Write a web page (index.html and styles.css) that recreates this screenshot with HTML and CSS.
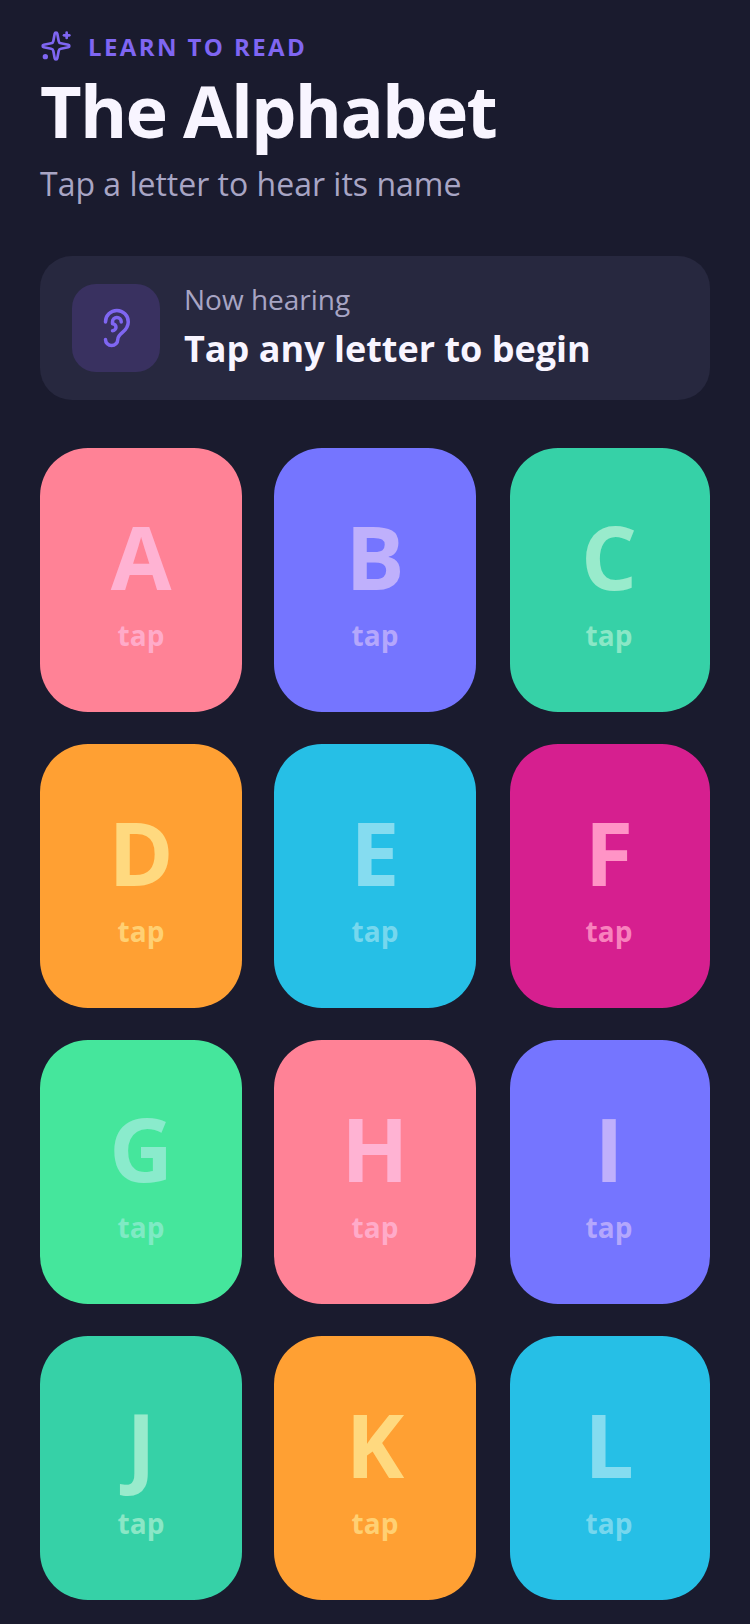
FILE: index.html
```html
<!DOCTYPE html>
<html lang="en">
<head>
<meta charset="utf-8">
<title>The Alphabet</title>
<link rel="stylesheet" href="styles.css">
</head>
<body>
<main class="screen">
  <header class="head">
    <div class="eyebrow">
      <svg class="sparkle" viewBox="0 0 24 24" fill="none" stroke="currentColor" stroke-width="2" stroke-linecap="round" stroke-linejoin="round"><path d="M11.017 2.814a1 1 0 0 1 1.966 0l1.051 5.558a2 2 0 0 0 1.594 1.594l5.558 1.051a1 1 0 0 1 0 1.966l-5.558 1.051a2 2 0 0 0-1.594 1.594l-1.051 5.558a1 1 0 0 1-1.966 0l-1.051-5.558a2 2 0 0 0-1.594-1.594l-5.558-1.051a1 1 0 0 1 0-1.966l5.558-1.051a2 2 0 0 0 1.594-1.594z"/><path d="M20 2v4"/><path d="M22 4h-4"/><circle cx="4" cy="20" r="1" fill="currentColor"/></svg>
      <span class="eyebrow-text">LEARN TO READ</span>
    </div>
    <h1 class="title">The Alphabet</h1>
    <p class="sub">Tap a letter to hear its name</p>
  </header>
  <section class="now">
    <div class="now-icon">
      <svg class="ear" viewBox="0 0 24 24" fill="none" stroke="currentColor" stroke-width="2" stroke-linecap="round" stroke-linejoin="round"><path d="M6 8.500a6.500 6.500 0 1 1 13 0c0 6-6 6-6 10a3.500 3.500 0 1 1-7 0"/><path d="M15 8.500a2.500 2.500 0 0 0-5 0v1a2 2 0 1 1 0 4"/></svg>
    </div>
    <div class="now-text">
      <div class="now-label">Now hearing</div>
      <div class="now-value">Tap any letter to begin</div>
    </div>
  </section>
  <section class="grid">
    <button class="card pink"><span class="letter">A</span><span class="tap">tap</span></button>
    <button class="card violet"><span class="letter">B</span><span class="tap">tap</span></button>
    <button class="card teal"><span class="letter">C</span><span class="tap">tap</span></button>
    <button class="card orange"><span class="letter">D</span><span class="tap">tap</span></button>
    <button class="card cyan"><span class="letter">E</span><span class="tap">tap</span></button>
    <button class="card magenta"><span class="letter">F</span><span class="tap">tap</span></button>
    <button class="card green"><span class="letter">G</span><span class="tap">tap</span></button>
    <button class="card pink"><span class="letter">H</span><span class="tap">tap</span></button>
    <button class="card violet"><span class="letter">I</span><span class="tap">tap</span></button>
    <button class="card teal"><span class="letter">J</span><span class="tap">tap</span></button>
    <button class="card orange"><span class="letter">K</span><span class="tap">tap</span></button>
    <button class="card cyan"><span class="letter">L</span><span class="tap">tap</span></button>
  </section>
</main>
</body>
</html>
```
FILE: styles.css
```css
* { box-sizing: border-box; }
html, body { margin: 0; padding: 0; }
body { background: #1a1b2e; font-family: "Open Sans", sans-serif; width: 750px; height: 1624px; overflow: hidden; }
.screen { padding: 29px 40px 0; }
.eyebrow { display: flex; align-items: center; gap: 16px; height: 34px; color: #7f66f2; }
.sparkle { width: 32px; height: 32px; display: block; }
.eyebrow-text { font-size: 24px; font-weight: 700; letter-spacing: 2.4px; }
.title { margin: 7px 0 0; font-size: 72px; line-height: 80px; font-weight: 700; color: #f8f5ff; letter-spacing: -1.8px; white-space: nowrap; }
.sub { margin: 12px 0 0; font-size: 32px; line-height: 44px; color: #a8a5c4; font-weight: 400; }
.now { margin-top: 50px; height: 144px; background: #27283f; border-radius: 32px; display: flex; align-items: center; padding: 0 32px; gap: 24px; }
.now-icon { width: 88px; height: 88px; border-radius: 24px; background: #393160; display: flex; align-items: center; justify-content: center; color: #7f66f2; }
.ear { width: 42px; height: 42px; display: block; }
.now-text { padding-bottom: 2px; }
.now-label { font-size: 28px; line-height: 38px; color: #a8a5c4; }
.now-value { font-size: 36px; line-height: 50px; font-weight: 700; color: #f8f5ff; margin-top: 6px; }
.grid { margin-top: 48px; display: grid; grid-template-columns: repeat(3, 202px); gap: 32px; }
.card { border: 0; padding: 0 0 10px; height: 264px; border-radius: 48px; display: flex; flex-direction: column; align-items: center; justify-content: center; font-family: inherit; }
.card:nth-child(3n) { margin-left: 2px; padding-right: 2px; }
.letter { font-size: 88px; line-height: 120px; font-weight: 700; }
.tap { font-size: 28px; line-height: 38px; font-weight: 700; opacity: .85; }
.pink { background: #ff8296; color: #ffb3d3; }
.violet { background: #7575ff; color: #bfb0fc; }
.teal { background: #36d1a7; color: #99ebcc; }
.orange { background: #ffa033; color: #ffd97f; }
.cyan { background: #26bfe6; color: #85dcf0; }
.magenta { background: #d61f8f; color: #ff94c6; }
.green { background: #45e69c; color: #8aebcc; }
```
